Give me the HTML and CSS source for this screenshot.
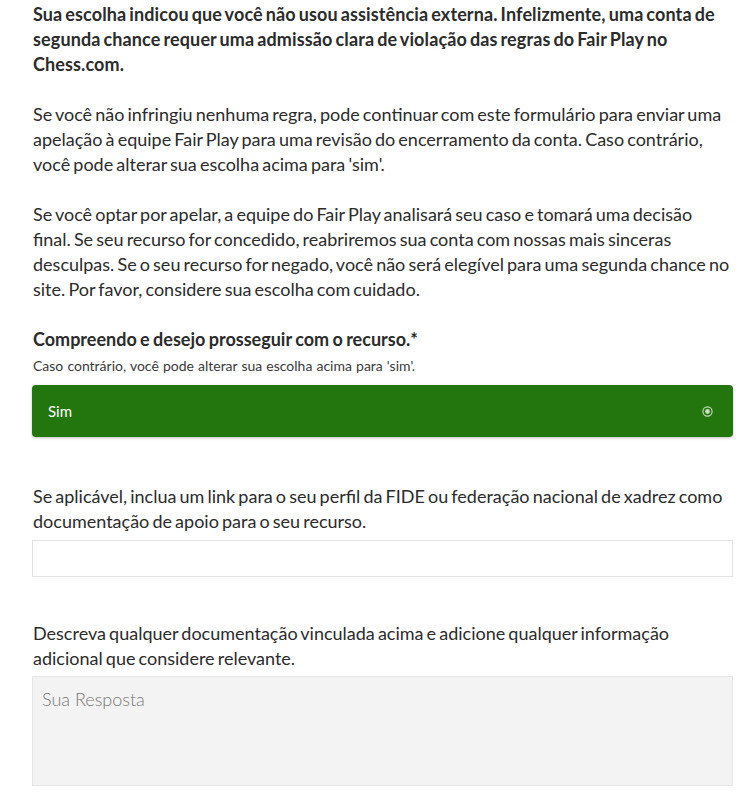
FILE: index.html
```html
<!DOCTYPE html>
<html lang="pt">
<head>
<meta charset="utf-8">
<link rel="stylesheet" href="styles.css">
</head>
<body>
<div class="form">
  <p class="intro">Sua escolha indicou que você não usou assistência externa. Infelizmente, uma conta de segunda chance requer uma admissão clara de violação das regras do Fair Play no Chess.com.</p>
  <p class="para">Se você não infringiu nenhuma regra, pode continuar com este formulário para enviar uma apelação à equipe Fair Play para uma revisão do encerramento da conta. Caso contrário, você pode alterar sua escolha acima para 'sim'.</p>
  <p class="para">Se você optar por apelar, a equipe do Fair Play analisará seu caso e tomará uma decisão final. Se seu recurso for concedido, reabriremos sua conta com nossas mais sinceras desculpas. Se o seu recurso for negado, você não será elegível para uma segunda chance no site. Por favor, considere sua escolha com cuidado.</p>

  <div class="question">
    <div class="q-title">Compreendo e desejo prosseguir com o recurso.*</div>
    <div class="q-help">Caso contrário, você pode alterar sua escolha acima para 'sim'.</div>
    <div class="choice">
      <span class="choice-label">Sim</span>
      <svg class="radio" width="11" height="11" viewBox="0 0 11 11"><circle cx="5.5" cy="5.5" r="4.6" fill="none" stroke="#c9dfc3" stroke-width="1.1"/><circle cx="5.5" cy="5.5" r="2.4" fill="#c9dfc3"/></svg>
    </div>
  </div>

  <div class="field">
    <div class="f-label">Se aplicável, inclua um link para o seu perfil da FIDE ou federação nacional de xadrez como documentação de apoio para o seu recurso.</div>
    <div class="input"></div>
  </div>

  <div class="field field-last">
    <div class="f-label">Descreva qualquer documentação vinculada acima e adicione qualquer informação adicional que considere relevante.</div>
    <div class="textarea"><span class="placeholder">Sua Resposta</span></div>
  </div>
</div>
</body>
</html>
```
FILE: styles.css
```css
html, body {
  margin: 0;
  padding: 0;
  background: #ffffff;
}
body {
  font-family: Lato, "Open Sans", sans-serif;
  color: #2b2b2b;
}
.form {
  width: 700px;
  padding: 2px 0 0 33px;
  font-size: 18px;
  line-height: 25px;
  word-spacing: -1.5px;
}
.intro, .para {
  margin: 0 0 25px 0;
}
.intro {
  font-weight: 700;
  word-spacing: -1.5px;
  letter-spacing: 0.12px;
}
.para {
  font-weight: 400;
}
.question {
  margin-top: 24px;
}
.q-title {
  font-size: 18px;
  font-weight: 700;
  line-height: 24px;
  word-spacing: -1px;
}
.q-help {
  font-size: 14px;
  line-height: 16px;
  margin-top: 7px;
  color: #3a3a3a;
  word-spacing: 0.5px;
}
.choice {
  margin-top: 11px;
  height: 52px;
  margin-left: -1px;
  background: #23760d;
  border-radius: 4px;
  box-shadow: 0 1px 3px rgba(0,0,0,0.25);
  display: flex;
  align-items: center;
  justify-content: space-between;
  padding: 0 20px 0 16px;
  color: #fff;
  font-size: 15px;
  word-spacing: 0;
}
.radio {
  display: block;
}
.field {
  margin-top: 47px;
}
.f-label {
  font-weight: 400;
  line-height: 25px;
}
.input {
  margin-top: 6px;
  margin-left: -1px;
  height: 35px;
  border: 1px solid #e3e3e3;
  background: #fff;
}
.field-last {
  margin-top: 44px;
}
.textarea {
  margin-top: 5px;
  margin-left: -1px;
  height: 98px;
  border: 1px solid #e6e6e6;
  background: #f3f3f3;
  padding: 10px 9px 0;
  word-spacing: 0;
}
.placeholder {
  font-weight: 300;
  color: #777;
  font-size: 18px;
}
```
